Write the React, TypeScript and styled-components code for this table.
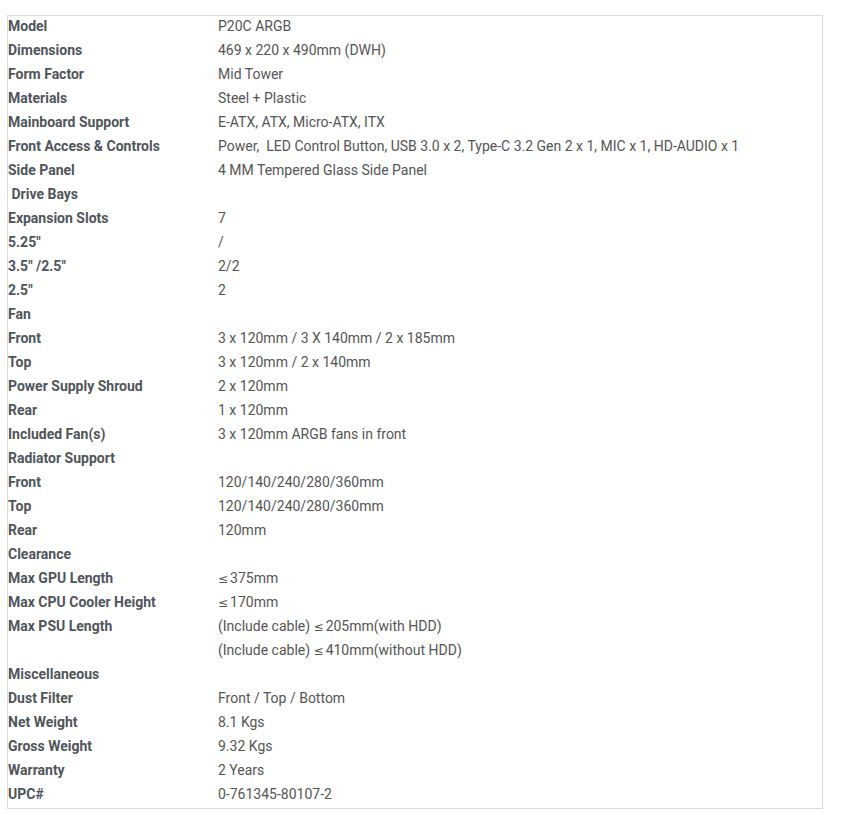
import React from 'react'
import styled, { createGlobalStyle } from 'styled-components'

const GlobalStyle = createGlobalStyle`
  html, body {
    margin: 0;
    padding: 0;
    background: #ffffff;
  }
  body {
    font-family: Roboto, 'Liberation Sans', Arial, sans-serif;
    font-size: 14px;
  }
`

const Page = styled.div`
  padding: 15px 0 0 7px;
`

const SpecTable = styled.div`
  display: grid;
  grid-template-columns: 210px 1fr;
  width: 814px;
  border: 1px solid #dcdcdc;
  color: #555555;
  line-height: 20.4px;
`

const Label = styled.div`
  padding: 0 0 3.6px;
  font-weight: 700;
  color: #50555b;
  white-space: pre;
`

const Value = styled.div`
  display: flex;
  flex-direction: column;
  gap: 4px;
  padding: 0 0 3.6px;
  white-space: pre;
`

// the "less or equal" sign comes from a wider fallback face in the original
const Le = styled.span`
  font-family: 'DejaVu Sans', sans-serif;
  font-size: 12px;
  line-height: 0;
  margin-right: 2px;
`

type Spec = [string, string[]]

const specs: Spec[] = [
  ['Model', ['P20C ARGB']],
  ['Dimensions', ['469 x 220 x 490mm (DWH)']],
  ['Form Factor', ['Mid Tower']],
  ['Materials', ['Steel + Plastic']],
  ['Mainboard Support', ['E-ATX, ATX, Micro-ATX, ITX']],
  ['Front Access & Controls', ['Power,  LED Control Button, USB 3.0 x 2, Type-C 3.2 Gen 2 x 1, MIC x 1, HD-AUDIO x 1']],
  ['Side Panel', ['4 MM Tempered Glass Side Panel']],
  [' Drive Bays', ['']],
  ['Expansion Slots', ['7']],
  ['5.25"', ['/']],
  ['3.5" /2.5"', ['2/2']],
  ['2.5"', ['2']],
  ['Fan', ['']],
  ['Front', ['3 x 120mm / 3 X 140mm / 2 x 185mm']],
  ['Top', ['3 x 120mm / 2 x 140mm']],
  ['Power Supply Shroud', ['2 x 120mm']],
  ['Rear', ['1 x 120mm']],
  ['Included Fan(s)', ['3 x 120mm ARGB fans in front']],
  ['Radiator Support', ['']],
  ['Front', ['120/140/240/280/360mm']],
  ['Top', ['120/140/240/280/360mm']],
  ['Rear', ['120mm']],
  ['Clearance', ['']],
  ['Max GPU Length', ['≤375mm']],
  ['Max CPU Cooler Height', ['≤170mm']],
  ['Max PSU Length', ['(Include cable) ≤205mm(with HDD)', '(Include cable) ≤410mm(without HDD)']],
  ['Miscellaneous', ['']],
  ['Dust Filter', ['Front / Top / Bottom']],
  ['Net Weight', ['8.1 Kgs']],
  ['Gross Weight', ['9.32 Kgs']],
  ['Warranty', ['2 Years']],
  ['UPC#', ['0-761345-80107-2']],
]

function renderLine(line: string) {
  if (!line) return '\u00a0'
  const parts = line.split('≤')
  return parts.map((part, k) => (
    <React.Fragment key={k}>
      {k > 0 && <Le>≤</Le>}
      {part}
    </React.Fragment>
  ))
}

export default function App() {
  return (
    <Page>
      <GlobalStyle />
      <SpecTable>
        {specs.map(([label, lines], i) => (
          <React.Fragment key={i}>
            <Label>{label}</Label>
            <Value>
              {lines.map((line, j) => (
                <div key={j}>{renderLine(line)}</div>
              ))}
            </Value>
          </React.Fragment>
        ))}
      </SpecTable>
    </Page>
  )
}
